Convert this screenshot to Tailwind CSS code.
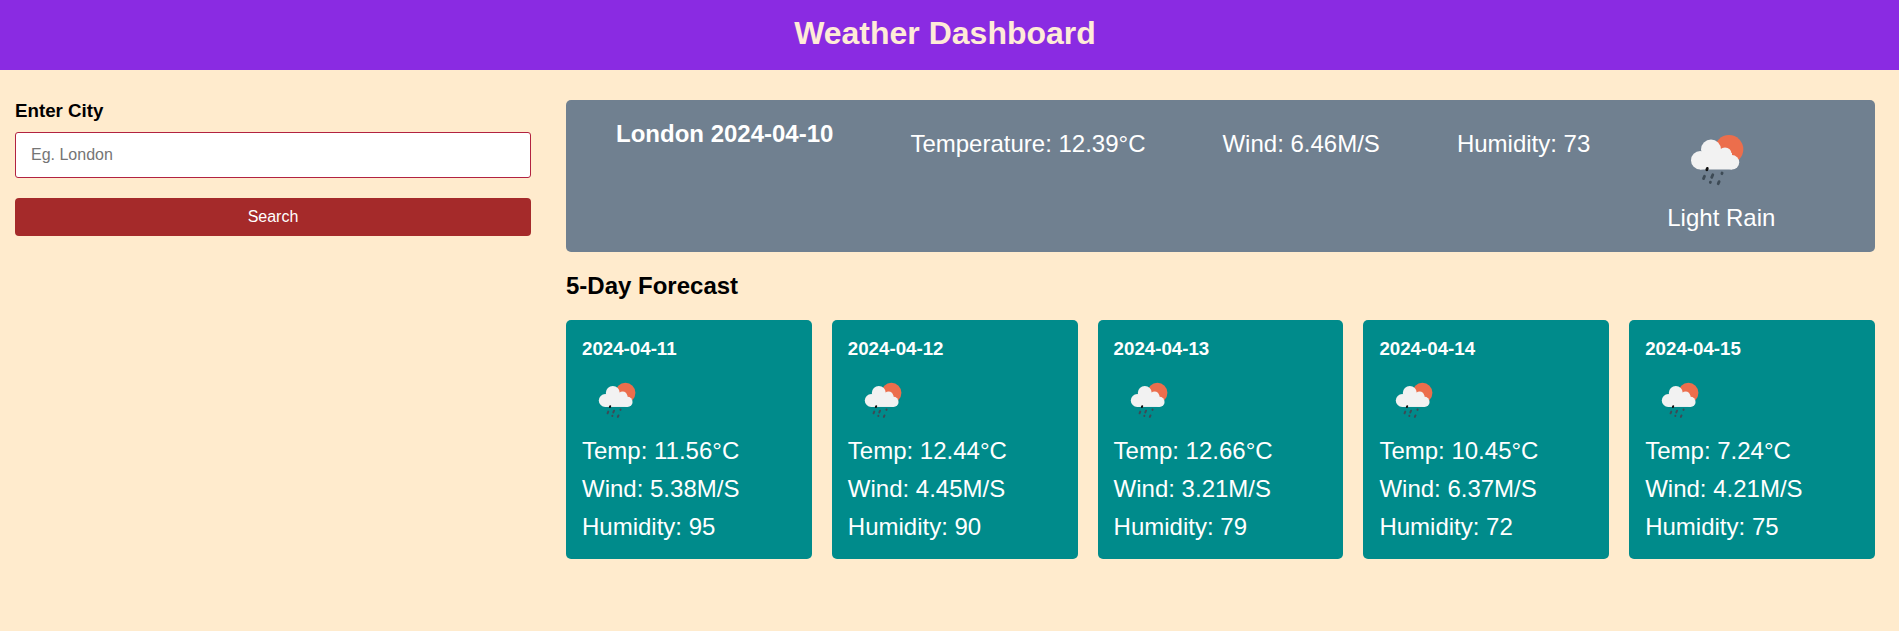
<!DOCTYPE html>
<html lang="en">
<head>
<meta charset="utf-8">
<title>Weather Dashboard</title>
<script src="https://cdn.jsdelivr.net/npm/@tailwindcss/browser@4"></script>
</head>
<body class="min-h-screen bg-[#ffebcd] font-['Liberation_Sans',Arial,sans-serif] text-black">
<svg class="hidden">
  <symbol id="rain" viewBox="0 0 100 100">
    <circle cx="62" cy="38.3" r="14.3" fill="#ec6e4c"/>
    <g fill="#f2f2f2">
      <circle cx="33.200" cy="49.300" r="9.200"/>
      <circle cx="44" cy="38.500" r="10"/>
      <circle cx="58" cy="43" r="6.600"/>
      <circle cx="65" cy="51.300" r="7.200"/>
      <rect x="33" y="42" width="32" height="16.500"/>
    </g>
    <g stroke="#3d4a55" stroke-width="2.800" stroke-linecap="round">
      <path d="M40.300 57.400l-.5 1.300" stroke="#111"/>
      <path d="M37.500 65.200l-1 2.400M45.800 63.800l-1.100 2.600M55.100 62l-.2.700M43.400 71.100l-.1.400M52.100 70.600l-.9 2.200"/>
    </g>
  </symbol>
</svg>
<header class="flex h-[70px] items-center justify-center bg-[#8a2be2] pr-[9px] pb-1">
  <h1 class="text-[32px] leading-[37px] font-bold text-[#ffebd7]">Weather Dashboard</h1>
</header>
<main class="flex gap-[35px] pt-[30px] pr-6 pl-[15px]">
  <form class="w-[516px] shrink-0">
    <label for="city" class="block h-8 text-[18.72px] leading-[21px] font-bold">Enter City</label>
    <input id="city" type="text" placeholder="Eg. London" class="block h-[46px] w-full rounded-[3px] border border-[#b22240] bg-white px-[15px] text-base placeholder:text-[#757575]">
    <button type="button" class="mt-5 block h-[38px] w-full rounded bg-[#a52a2a] text-base text-white">Search</button>
  </form>
  <section class="min-w-0 flex-1">
    <div class="flex h-[152px] gap-[77px] rounded-[5px] bg-[#708090] pt-5 pl-[50px] text-2xl leading-[27px] whitespace-nowrap text-white">
      <h2 class="font-bold">London 2024-04-10</h2>
      <p class="pt-2.5">Temperature: 12.39°C</p>
      <p class="pt-2.5">Wind: 6.46M/S</p>
      <p class="pt-2.5">Humidity: 73</p>
      <div class="-mt-[9px]">
        <svg class="size-[100px]"><use href="#rain"/></svg>
        <p class="-mt-[7px]">Light Rain</p>
      </div>
    </div>
    <h2 class="mt-5 text-2xl leading-[28px] font-bold">5-Day Forecast</h2>
    <div id="cards" class="mt-5 grid grid-cols-5 gap-5"></div>
  </section>
</main>
<template id="card">
  <article class="h-[239px] rounded-[5px] bg-[#008b8b] px-4 pt-[18px] text-white">
    <h3 class="text-[18.72px] leading-[21px] font-bold"></h3>
    <svg class="mt-[7px] size-[70px]"><use href="#rain"/></svg>
    <div class="-mt-1 text-2xl leading-[38px] whitespace-nowrap"><p></p><p></p><p></p></div>
  </article>
</template>
<script>
  const days = [
    ["2024-04-11", "11.56", "5.38", 95],
    ["2024-04-12", "12.44", "4.45", 90],
    ["2024-04-13", "12.66", "3.21", 79],
    ["2024-04-14", "10.45", "6.37", 72],
    ["2024-04-15", "7.24", "4.21", 75]
  ];
  const tpl = document.getElementById("card");
  for (const [date, temp, wind, hum] of days) {
    const n = tpl.content.cloneNode(true);
    n.querySelector("h3").textContent = date;
    const p = n.querySelectorAll("p");
    p[0].textContent = `Temp: ${temp}°C`;
    p[1].textContent = `Wind: ${wind}M/S`;
    p[2].textContent = `Humidity: ${hum}`;
    document.getElementById("cards").append(n);
  }
</script>
</body>
</html>
